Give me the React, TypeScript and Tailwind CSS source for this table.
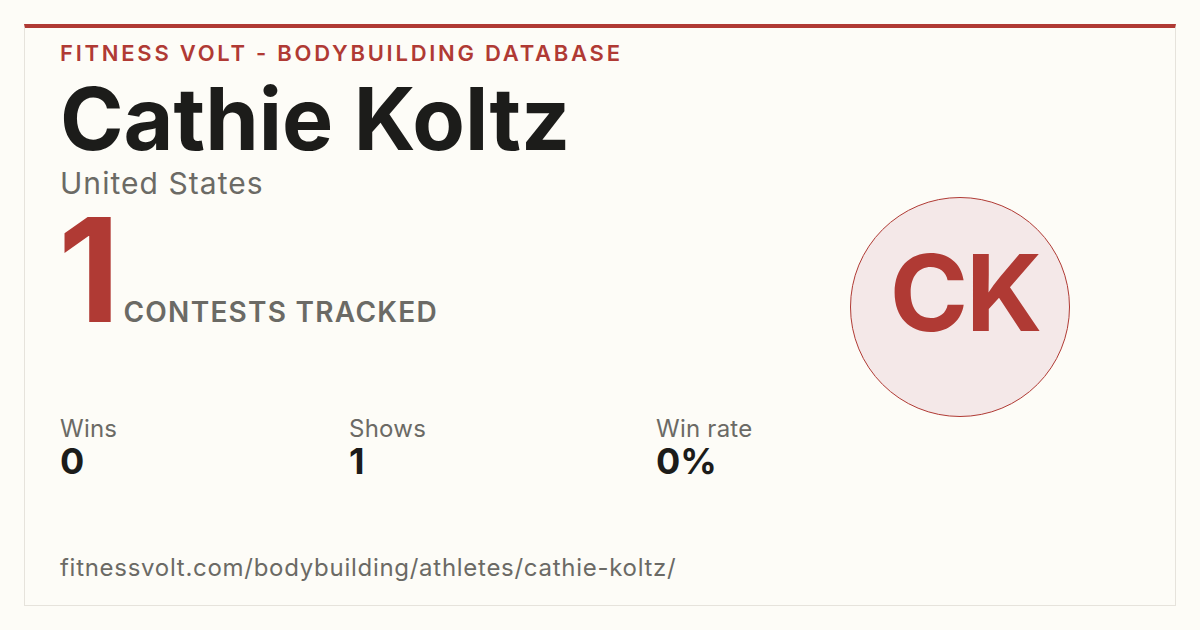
export default function App() {
  const stats = [
    { label: "Wins", value: "0", width: "w-[289px]" },
    { label: "Shows", value: "1", width: "w-[307px]" },
    { label: "Win rate", value: "0%", width: "w-[160px]" },
  ]

  return (
    <div className="w-[1200px] h-[630px] bg-[#fdfcf7] pt-6 px-6 font-['Inter',sans-serif]">
      <div className="h-[582px] border border-[#e6e3dc] border-t-4 border-t-[#b03a34] flex">
        {/* Left column */}
        <div className="flex-1 min-w-0 flex flex-col pl-[35px] pt-[14px]">
          <div className="text-[22px] leading-none font-semibold tracking-[0.125em] text-[#b03a34]">
            FITNESS VOLT - BODYBUILDING DATABASE
          </div>
          <div className="mt-3 text-[86px] leading-none font-bold text-[#1c1c1a]">
            Cathie Koltz
          </div>
          <div className="mt-[6px] text-[30px] leading-none tracking-[0.035em] text-[#6b6a65]">United States</div>

          <div className="flex items-baseline">
            <span className="text-[144px] leading-none font-bold text-[#b03a34] -ml-[2px] tracking-[-0.06em]">1</span>
            <span className="ml-[12px] text-[28px] leading-none font-semibold tracking-[0.045em] text-[#6b6a65]">
              CONTESTS TRACKED
            </span>
          </div>

          <div className="mt-[75px] flex">
            {stats.map((s) => (
              <div key={s.label} className={s.width}>
                <div className="text-[24px] leading-none tracking-[0.01em] text-[#6b6a65]">{s.label}</div>
                <div className="mt-[2px] text-[36px] leading-none font-bold text-[#1c1c1a]">{s.value}</div>
              </div>
            ))}
          </div>

          <div className="mt-[77px] text-[24px] leading-none tracking-[0.03em] text-[#6b6a65]">
            fitnessvolt.com/bodybuilding/athletes/cathie-koltz/
          </div>
        </div>

        {/* Avatar */}
        <div className="flex-none pt-[169px] pr-[105px]">
          <div className="w-[220px] h-[220px] rounded-full bg-[#f4e8e8] border-[1.5px] border-[#b03a34] flex items-center justify-center pb-[28px] pl-[10px]">
            <span className="text-[106px] leading-none font-bold text-[#b03a34] tracking-[-0.02em]">CK</span>
          </div>
        </div>
      </div>
    </div>
  )
}
